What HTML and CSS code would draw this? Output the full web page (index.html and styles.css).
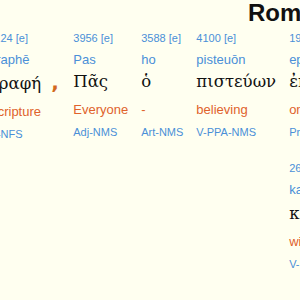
FILE: index.html
```html
<!DOCTYPE html>
<html lang="en">
<head>
<meta charset="utf-8">
<title>Romans 10:11 Interlinear</title>
<link rel="stylesheet" href="styles.css">
</head>
<body>
<div class="page">
  <h1 class="title">Romans 10:11</h1>
  <div class="words">
    <div class="word">
      <span class="num">1124 [e]</span>
      <span class="tr">graphē</span>
      <span class="gk">γραφή<span class="punct">,</span></span>
      <span class="en">Scripture</span>
      <span class="pos">N-NFS</span>
    </div>
    <div class="word">
      <span class="num">3956 [e]</span>
      <span class="tr">Pas</span>
      <span class="gk">Πᾶς</span>
      <span class="en">Everyone</span>
      <span class="pos">Adj-NMS</span>
    </div>
    <div class="word">
      <span class="num">3588 [e]</span>
      <span class="tr">ho</span>
      <span class="gk">ὁ</span>
      <span class="en">-</span>
      <span class="pos">Art-NMS</span>
    </div>
    <div class="word">
      <span class="num">4100 [e]</span>
      <span class="tr">pisteuōn</span>
      <span class="gk">πιστεύων</span>
      <span class="en">believing</span>
      <span class="pos">V-PPA-NMS</span>
    </div>
    <div class="word">
      <span class="num">1909 [e]</span>
      <span class="tr">ep’</span>
      <span class="gk">ἐπ’</span>
      <span class="en">on</span>
      <span class="pos">Prep</span>
    </div>
    <div class="word">
      <span class="num">846 [e]</span>
      <span class="tr">autō</span>
      <span class="gk">αὐτῷ</span>
      <span class="en">Him</span>
      <span class="pos">PPro-DM3S</span>
    </div>
    <div class="word">
      <span class="num">3756 [e]</span>
      <span class="tr">ou</span>
      <span class="gk">οὐ</span>
      <span class="en">not</span>
      <span class="pos">Adv</span>
    </div>
    <div class="word wrap">
      <span class="num">2617 [e]</span>
      <span class="tr">kataischynthēsetai</span>
      <span class="gk">καταισχυνθήσεται<span class="punct">.</span></span>
      <span class="en">will be put to shame</span>
      <span class="pos">V-FIP-3S</span>
    </div>
  </div>
</div>
</body>
</html>
```
FILE: styles.css
```css
html, body {
  margin: 0;
  padding: 0;
  overflow: hidden;
  background: #fffff0;
}

.page {
  margin-left: -11px;
  width: 700px;
  font-family: "Liberation Sans", Arial, sans-serif;
}

.title {
  margin: 0;
  padding-left: 259px;
  font-size: 24px;
  line-height: 26px;
  font-weight: bold;
  color: #111;
  white-space: nowrap;
}

.words {
  display: grid;
  grid-template-columns: repeat(7, max-content);
  column-gap: 13px;
  padding-top: 5px;
}

.word {
  display: flex;
  flex-direction: column;
  align-items: flex-start;
  padding-bottom: 20px;
  white-space: nowrap;
}

.wrap {
  grid-column: 5;
}

.num {
  font-size: 11px;
  line-height: 14px;
  color: #4a8fd8;
}

.tr {
  margin-top: 7px;
  font-size: 13px;
  line-height: 16px;
  color: #4a8fd8;
}

.gk {
  margin-top: 3px;
  font-family: "DejaVu Serif", "Liberation Serif", serif;
  font-size: 16.5px;
  line-height: 22px;
  color: #111;
}

.punct {
  margin-left: 10px;
  padding-right: 1.5px;
  font-family: "DejaVu Sans", sans-serif;
  font-size: 20px;
  font-weight: bold;
  color: #d2691e;
}

.en {
  margin-top: 9px;
  font-size: 13px;
  line-height: 16px;
  color: #e0622c;
}

.pos {
  margin-top: 7px;
  font-size: 11px;
  line-height: 14px;
  color: #4a8fd8;
}
```
